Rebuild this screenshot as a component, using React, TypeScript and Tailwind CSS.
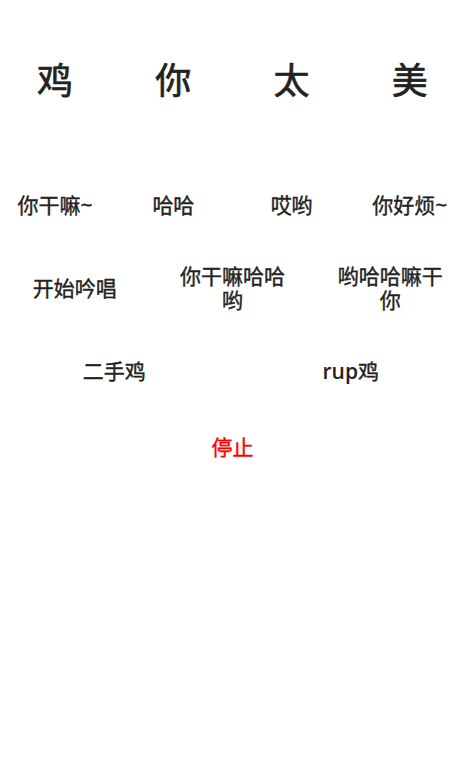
import React from "react";

const font = { fontFamily: '"Open Sans", "Noto Sans CJK SC", sans-serif' };

export default function App() {
  const top = ["鸡", "你", "太", "美"];
  const row2 = ["你干嘛~", "哈哈", "哎哟", "你好烦~"];
  const row3 = ["开始吟唱", "你干嘛哈哈哟", "哟哈哈嘛干你"];
  return (
    <div className="w-[465px] h-[762px] bg-white overflow-hidden" style={font}>
      <div className="w-[473px] -ml-[4px] flex flex-col pt-[56px] text-[#222] [-webkit-text-stroke:0.4px_#222]">
        <div className="grid grid-cols-4 h-[50px] items-center [-webkit-text-stroke:0.7px_#222]">
          {top.map((t) => (
            <div key={t} className="text-center text-[36px] leading-[50px]">
              {t}
            </div>
          ))}
        </div>
        <div className="grid grid-cols-4 h-[40px] items-center mt-[79px]">
          {row2.map((t) => (
            <div key={t} className="text-center text-[21px] leading-[24px]">
              {t}
            </div>
          ))}
        </div>
        <div className="grid grid-cols-3 h-[57px] items-center mt-[34px]">
          {row3.map((t) => (
            <div key={t} className="h-full flex items-center justify-center px-[22px] text-center text-[21px] leading-[24px]">
              {t}
            </div>
          ))}
        </div>
        <div className="grid grid-cols-2 h-[40px] items-center mt-[35px]">
          <div className="text-center text-[21px] leading-[24px]">二手鸡</div>
          <div className="text-center text-[21px] leading-[24px]">
            <span className="font-semibold [-webkit-text-stroke:0px]">rup</span>鸡
          </div>
        </div>
        <div className="h-[40px] mt-[37px] flex items-center justify-center text-[21px] text-[#ff0000] [-webkit-text-stroke:0.4px_#ff0000]">
          停止
        </div>
      </div>
    </div>
  );
}
